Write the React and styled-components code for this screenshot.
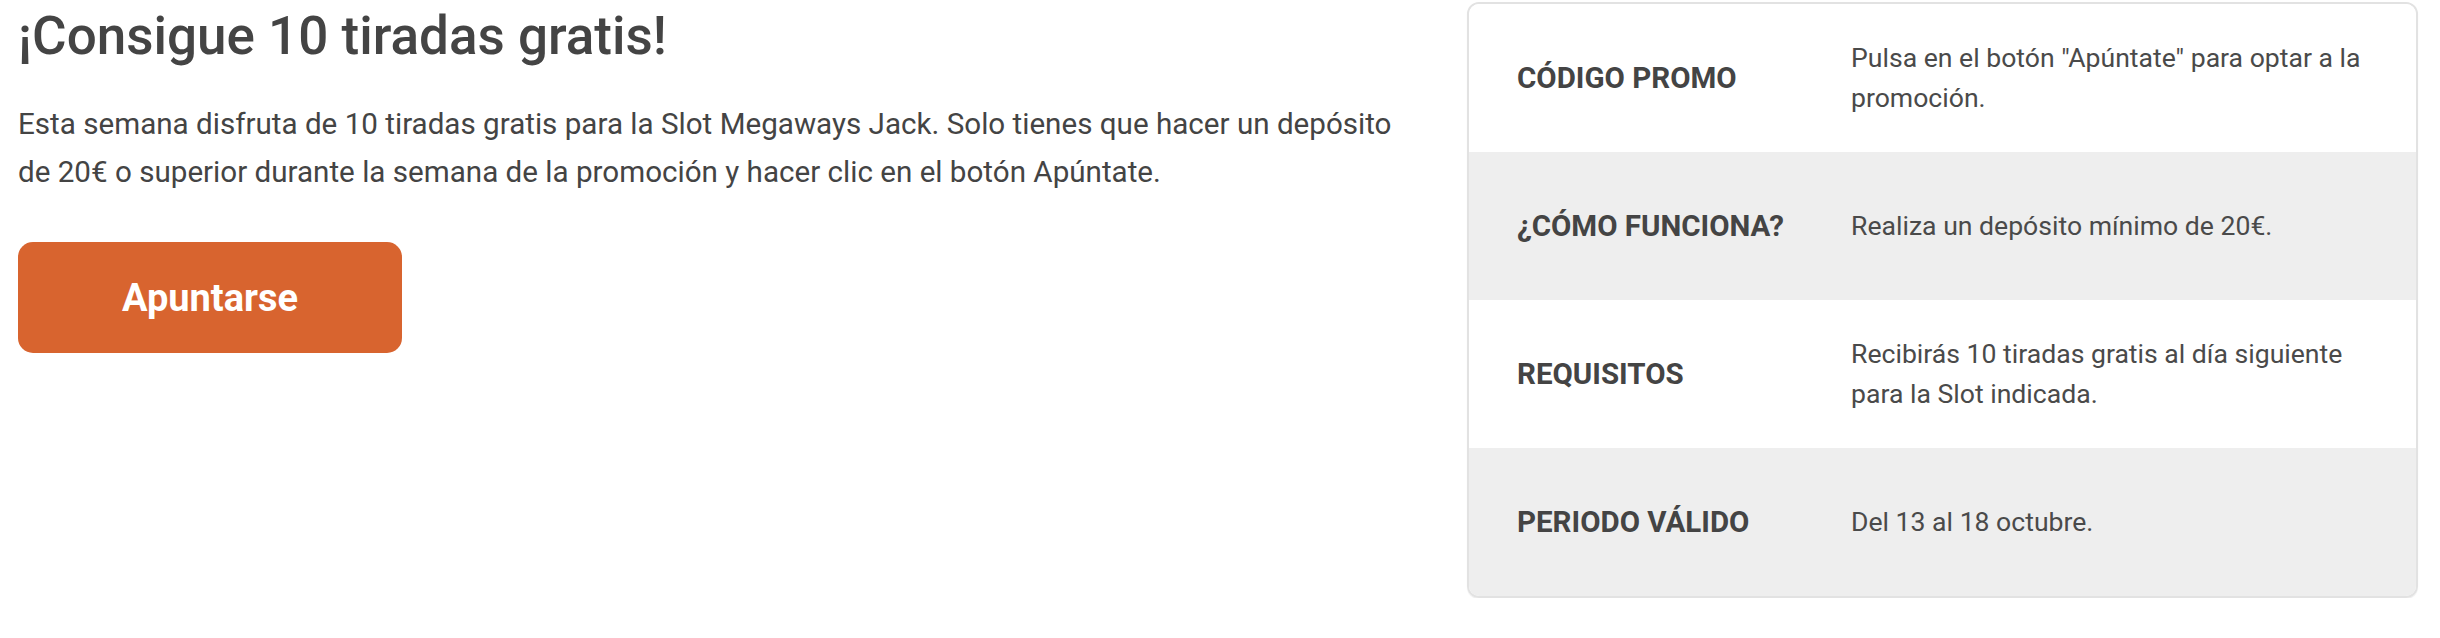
import React from "react";
import styled, { createGlobalStyle } from "styled-components";

const GlobalStyle = createGlobalStyle`
  body {
    margin: 0;
    background: #ffffff;
    font-family: Roboto, "Open Sans", Arial, sans-serif;
    color: #444444;
  }
`;

const PromoWrapper = styled.div`
  display: grid;
  grid-template-columns: 1fr 951px;
  column-gap: 37px;
  align-items: start;
  padding: 2px 22px 0 18px;
`;

const PromoInfo = styled.div`
  display: flex;
  flex-direction: column;
  align-items: flex-start;
`;

const PromoTitle = styled.h1`
  margin: 2px 0 0 0;
  font-size: 53px;
  line-height: 64px;
  font-weight: 500;
  color: #444444;
`;

const PromoText = styled.p`
  margin: 32px 0 0 0;
  font-size: 29.6px;
  line-height: 48px;
  font-weight: 400;
  color: #444444;
`;

const JoinButton = styled.button`
  margin-top: 46px;
  width: 384px;
  height: 111px;
  border: none;
  border-radius: 15px;
  background-color: #d8642f;
  color: #ffffff;
  font-family: inherit;
  font-size: 38px;
  font-weight: 700;
  cursor: pointer;
`;

const DetailsCard = styled.div`
  border: 2px solid #e2e2e2;
  border-radius: 12px;
  overflow: hidden;
  box-shadow: 0 1px 1px rgba(0, 0, 0, 0.08);
`;

const DetailRow = styled.div`
  display: grid;
  grid-template-columns: 382px 1fr;
  align-items: center;
  height: 148px;
  background-color: ${({ shaded }) => (shaded ? "#eeeeee" : "#ffffff")};
`;

const DetailLabel = styled.div`
  padding-left: 48px;
  font-size: 29.5px;
  font-weight: 700;
  color: #444444;
`;

const DetailValue = styled.div`
  padding-right: 40px;
  font-size: 26.6px;
  line-height: 40px;
  color: #4a4a4a;
`;

const details = [
  {
    id: 1,
    label: "CÓDIGO PROMO",
    value: 'Pulsa en el botón "Apúntate" para optar a la promoción.',
  },
  {
    id: 2,
    label: "¿CÓMO FUNCIONA?",
    value: "Realiza un depósito mínimo de 20€.",
  },
  {
    id: 3,
    label: "REQUISITOS",
    value: "Recibirás 10 tiradas gratis al día siguiente para la Slot indicada.",
  },
  {
    id: 4,
    label: "PERIODO VÁLIDO",
    value: "Del 13 al 18 octubre.",
  },
];

const App = () => {
  return (
    <>
      <GlobalStyle />
      <PromoWrapper>
        <PromoInfo>
          <PromoTitle>¡Consigue 10 tiradas gratis!</PromoTitle>
          <PromoText>
            Esta semana disfruta de 10 tiradas gratis para la Slot Megaways
            Jack. Solo tienes que hacer un depósito de 20€ o superior durante
            la semana de la promoción y hacer clic en el botón Apúntate.
          </PromoText>
          <JoinButton>Apuntarse</JoinButton>
        </PromoInfo>
        <DetailsCard>
          {details.map((item, i) => (
            <DetailRow key={item.id} shaded={i % 2 === 1}>
              <DetailLabel>{item.label}</DetailLabel>
              <DetailValue>{item.value}</DetailValue>
            </DetailRow>
          ))}
        </DetailsCard>
      </PromoWrapper>
    </>
  );
};

export default App;
